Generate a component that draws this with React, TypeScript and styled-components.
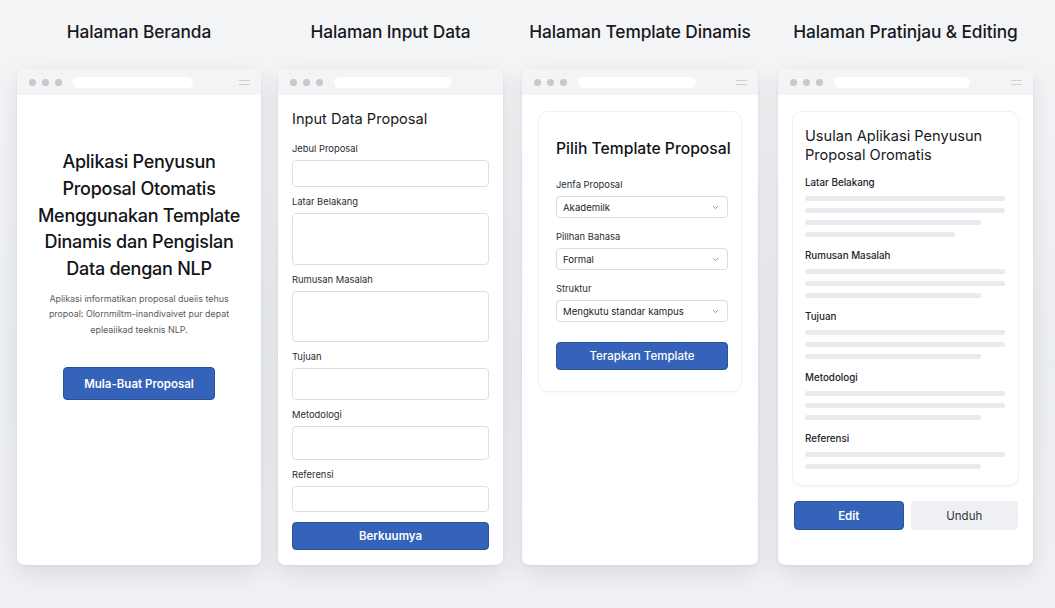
import styled, { createGlobalStyle } from "styled-components";
import { ChevronDown } from "lucide-react";

const GlobalStyle = createGlobalStyle`
  html, body {
    margin: 0;
    padding: 0;
    background: #eff0f3;
  }
  body {
    font-family: Inter, "Noto Sans", "Liberation Sans", sans-serif;
    color: #1b1d21;
  }
  * {
    box-sizing: border-box;
  }
`;

const Page = styled.div`
  width: 1055px;
  height: 608px;
  display: flex;
  align-items: flex-start;
  padding-left: 17px;
  background: linear-gradient(180deg, #f4f5f7 0%, #eceef1 60%, #f0f1f4 100%);
  overflow: hidden;
`;

const Column = styled.section<{ $width: number; $offset?: number }>`
  width: ${(p) => p.$width}px;
  margin-left: ${(p) => p.$offset ?? 0}px;
  flex: none;
  display: flex;
  flex-direction: column;
  align-items: center;
`;

const ScreenTitle = styled.h2`
  margin: 20px 0 25px;
  height: 24px;
  line-height: 24px;
  font-size: 17.3px;
  font-weight: 500;
  letter-spacing: -0.1px;
  white-space: nowrap;
  color: #17191d;
`;

const Window = styled.div`
  width: 100%;
  height: 496px;
  background: #ffffff;
  border-radius: 7px;
  box-shadow: 0 8px 22px rgba(30, 35, 50, 0.1), 0 1px 3px rgba(30, 35, 50, 0.06);
  display: flex;
  flex-direction: column;
  overflow: hidden;
`;

const Chrome = styled.div`
  height: 26px;
  flex: none;
  background: #f3f4f6;
  display: flex;
  align-items: center;
  padding: 0 11px 0 12px;
`;

const Dot = styled.span`
  width: 7px;
  height: 7px;
  border-radius: 50%;
  background: #c6c8cc;
  margin-right: 6px;
`;

const UrlBar = styled.span<{ $width: number }>`
  width: ${(p) => p.$width}px;
  height: 11px;
  border-radius: 6px;
  background: #ffffff;
  margin-left: 5px;
`;

const Burger = styled.span`
  margin-left: auto;
  width: 11px;
  height: 5px;
  border-top: 1.5px solid #cfd1d5;
  border-bottom: 1.5px solid #cfd1d5;
`;

const HeroBody = styled.div`
  padding-top: 54px;
  display: flex;
  flex-direction: column;
  align-items: center;
  text-align: center;
`;

const HeroTitle = styled.h1`
  margin: 0;
  font-size: 18px;
  line-height: 26.8px;
  font-weight: 500;
  letter-spacing: -0.25px;
  white-space: nowrap;
  color: #121417;
`;

const HeroText = styled.p`
  margin: 8px 0 0;
  width: 190px;
  font-size: 8.9px;
  line-height: 15.5px;
  color: #565b63;
`;

const PrimaryButton = styled.button<{ $height: number }>`
  height: ${(p) => p.$height}px;
  border: 1px solid #2a519c;
  border-radius: 4px;
  background: #3463b9;
  color: #ffffff;
  font-family: inherit;
  font-size: 11.5px;
  font-weight: 600;
  cursor: pointer;
`;

const HeroButton = styled(PrimaryButton)`
  width: 152px;
  margin-top: 30px;
`;

const FormBody = styled.div`
  padding: 14px 14px 0 14px;
  display: flex;
  flex-direction: column;
`;

const FormHeading = styled.h3`
  margin: 0 0 14px;
  font-size: 14.6px;
  line-height: 20px;
  font-weight: 400;
  color: #17191d;
`;

const Field = styled.div`
  display: flex;
  flex-direction: column;
  margin-bottom: 9px;
`;

const Label = styled.label`
  font-size: 9.4px;
  line-height: 12px;
  color: #2a2d33;
  margin-bottom: 5px;
  white-space: nowrap;
`;

const InputBox = styled.div<{ $height: number }>`
  height: ${(p) => p.$height}px;
  border: 1px solid #dcdfe4;
  border-radius: 4px;
  background: #ffffff;
`;

const SubmitButton = styled(PrimaryButton)`
  width: 100%;
  margin-top: 1px;
`;

const CardArea = styled.div`
  padding: 16px;
`;

const Card = styled.div`
  border: 1px solid #eef0f3;
  border-radius: 10px;
  background: #ffffff;
  box-shadow: 0 1px 3px rgba(30, 35, 50, 0.03);
`;

const TemplateCard = styled(Card)`
  padding: 26px 13px 21px 17px;
`;

const TemplateHeading = styled.h3`
  margin: 0 0 19px;
  font-size: 15.7px;
  line-height: 22px;
  font-weight: 500;
  white-space: nowrap;
  color: #121417;
`;

const SelectField = styled.div`
  display: flex;
  flex-direction: column;
  margin-bottom: 13px;
`;

const SelectBox = styled.div`
  height: 22px;
  border: 1px solid #d9dce1;
  border-radius: 4px;
  display: flex;
  align-items: center;
  justify-content: space-between;
  padding: 0 7px 0 6px;
  font-size: 9.6px;
  color: #1f2227;
  background: #ffffff;

  svg {
    color: #6b7078;
  }
`;

const ApplyButton = styled(PrimaryButton)`
  width: 100%;
  margin-top: 7px;
  font-weight: 500;
  font-size: 11.5px;
`;

const PreviewArea = styled.div`
  padding: 16px 14px 0 14px;
  display: flex;
  flex-direction: column;
`;

const PreviewCard = styled(Card)`
  padding: 15px 13px 16px 12px;
`;

const PreviewHeading = styled.h3`
  margin: 0 0 11px;
  font-size: 14.6px;
  line-height: 19px;
  font-weight: 400;
  color: #17191d;
`;

const Section = styled.div`
  margin-bottom: 12px;

  &:last-child {
    margin-bottom: 0;
  }
`;

const SectionTitle = styled.div`
  font-size: 9.8px;
  line-height: 13px;
  font-weight: 500;
  color: #1f2227;
  margin-bottom: 7px;
`;

const Bar = styled.div<{ $width: string }>`
  width: ${(p) => p.$width};
  height: 5px;
  border-radius: 3px;
  background: #e8eaee;
  margin-bottom: 7px;

  &:last-child {
    margin-bottom: 0;
  }
`;

const ActionRow = styled.div`
  display: flex;
  gap: 7px;
  margin-top: 15px;
  padding: 0 1px 0 2px;
`;

const EditButton = styled(PrimaryButton)`
  flex: 1;
  font-weight: 600;
`;

const GhostButton = styled.button`
  flex: 1;
  height: 29px;
  border: none;
  border-radius: 4px;
  background: #eef0f4;
  color: #33363c;
  font-family: inherit;
  font-size: 11.5px;
  cursor: pointer;
`;

const BrowserChrome = ({ url, menu = true }: { url: number; menu?: boolean }) => (
  <Chrome>
    <Dot />
    <Dot />
    <Dot />
    <UrlBar $width={url} />
    {menu && <Burger />}
  </Chrome>
);

const heroLines = [
  "Aplikasi Penyusun",
  "Proposal Otomatis",
  "Menggunakan Template",
  "Dinamis dan Pengislan",
  "Data dengan NLP",
];

const formFields = [
  { label: "Jebul Proposal", height: 27 },
  { label: "Latar Belakang", height: 52 },
  { label: "Rumusan Masalah", height: 51 },
  { label: "Tujuan", height: 32 },
  { label: "Metodologi", height: 34 },
  { label: "Referensi", height: 26 },
];

const selects = [
  { label: "Jenfa Proposal", value: "Akademilk" },
  { label: "Pillhan Bahasa", value: "Formal" },
  { label: "Struktur", value: "Mengkutu standar kampus" },
];

const sections = [
  { title: "Latar Belakang", bars: ["100%", "100%", "88%", "75%"] },
  { title: "Rumusan Masalah", bars: ["100%", "100%", "88%"] },
  { title: "Tujuan", bars: ["100%", "100%", "88%"] },
  { title: "Metodologi", bars: ["100%", "100%", "88%"] },
  { title: "Referensi", bars: ["100%", "88%"] },
];

export default function App() {
  return (
    <>
      <GlobalStyle />
      <Page>
        <Column $width={244}>
          <ScreenTitle>Halaman Beranda</ScreenTitle>
          <Window>
            <BrowserChrome url={120} />
            <HeroBody>
              <HeroTitle>
                {heroLines.map((line, i) => (
                  <div key={i}>{line}</div>
                ))}
              </HeroTitle>
              <HeroText>
                Aplikasi informatikan proposal dueiis tehus propoal:
                Olornmiltm-inandivaivet pur depat epleaiikad teeknis NLP.
              </HeroText>
              <HeroButton $height={33}>Mula-Buat Proposal</HeroButton>
            </HeroBody>
          </Window>
        </Column>

        <Column $width={225} $offset={17}>
          <ScreenTitle>Halaman Input Data</ScreenTitle>
          <Window>
            <BrowserChrome url={117} menu={false} />
            <FormBody>
              <FormHeading>Input Data Proposal</FormHeading>
              {formFields.map((f) => (
                <Field key={f.label}>
                  <Label>{f.label}</Label>
                  <InputBox $height={f.height} />
                </Field>
              ))}
              <SubmitButton $height={28}>Berkuumya</SubmitButton>
            </FormBody>
          </Window>
        </Column>

        <Column $width={236} $offset={19}>
          <ScreenTitle>Halaman Template Dinamis</ScreenTitle>
          <Window>
            <BrowserChrome url={118} />
            <CardArea>
              <TemplateCard>
                <TemplateHeading>Pilih Template Proposal</TemplateHeading>
                {selects.map((s) => (
                  <SelectField key={s.label}>
                    <Label>{s.label}</Label>
                    <SelectBox>
                      <span>{s.value}</span>
                      <ChevronDown size={9} strokeWidth={2} />
                    </SelectBox>
                  </SelectField>
                ))}
                <ApplyButton $height={28}>Terapkan Template</ApplyButton>
              </TemplateCard>
            </CardArea>
          </Window>
        </Column>

        <Column $width={255} $offset={20}>
          <ScreenTitle>Halaman Pratinjau &amp; Editing</ScreenTitle>
          <Window>
            <BrowserChrome url={136} />
            <PreviewArea>
              <PreviewCard>
                <PreviewHeading>
                  Usulan Aplikasi Penyusun
                  <br />
                  Proposal Oromatis
                </PreviewHeading>
                {sections.map((s) => (
                  <Section key={s.title}>
                    <SectionTitle>{s.title}</SectionTitle>
                    {s.bars.map((w, i) => (
                      <Bar key={i} $width={w} />
                    ))}
                  </Section>
                ))}
              </PreviewCard>
              <ActionRow>
                <EditButton $height={29}>Edit</EditButton>
                <GhostButton>Unduh</GhostButton>
              </ActionRow>
            </PreviewArea>
          </Window>
        </Column>
      </Page>
    </>
  );
}
